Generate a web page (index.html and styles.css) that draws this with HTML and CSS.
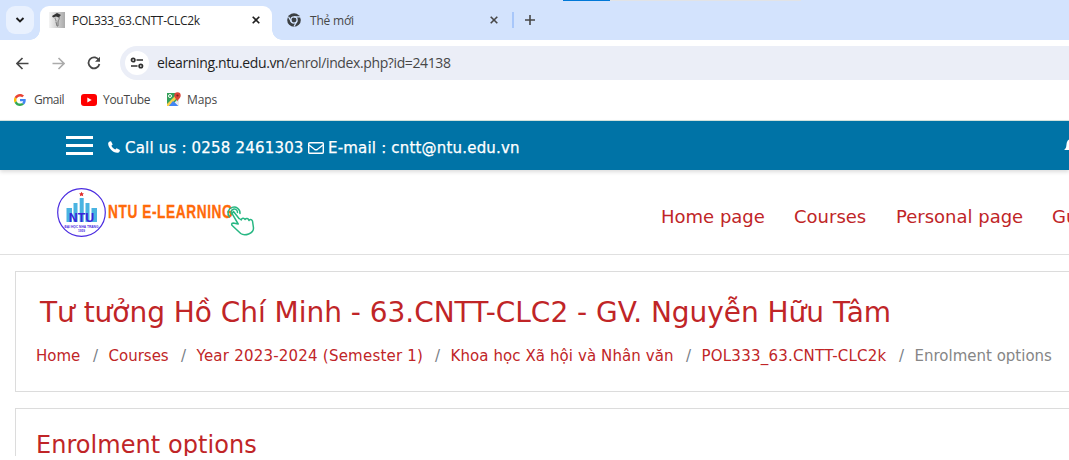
FILE: index.html
```html
<!DOCTYPE html>
<html lang="vi">
<head>
<meta charset="utf-8">
<title>POL333_63.CNTT-CLC2k</title>
<link rel="stylesheet" href="styles.css">
</head>
<body>
<div class="window">
  <div class="tabstrip">
    <div class="loadbar"></div>
    <button class="tab-search"><svg width="10" height="10" viewBox="0 0 10 10"><path d="M1.500 3 5 6.500 8.500 3" fill="none" stroke="#1f1f1f" stroke-width="1.900"/></svg></button>
    <div class="tab active">
      <svg class="favicon" width="16" height="16" viewBox="0 0 16 16"><defs><linearGradient id="fg"><stop offset="0" stop-color="#f4f4f4"/><stop offset="1" stop-color="#aaa"/></linearGradient></defs><path d="M0 0h16v16H0z" fill="url(#fg)"/><path d="M3 4 8 1l4 2-1 1-1 1.500-3-1-3 1z" fill="#333"/><path d="M6 5.500c0 2 1 2 1 4M10 5c1 2-1 3-1 5v4H8l-1-4" fill="none" stroke="#777"/></svg>
      <span class="tab-title">POL333_63.CNTT-CLC2k</span>
      <svg class="close" width="8" height="8" viewBox="0 0 8 8"><path d="m.7.7 6.600 6.600M7.300.7.7 7.300" stroke="#1f1f1f" stroke-width="1.600"/></svg>
    </div>
    <div class="tab idle">
      <svg class="chrome" width="14" height="14" viewBox="0 0 16 16"><circle cx="8" cy="8" r="7.800" fill="#3c4043"/><circle cx="8" cy="8" r="3.600" fill="none" stroke="#d3e3fd" stroke-width="1.500"/><path d="M8 4.400h7.500M4.900 9.800 1.800 4.400M11.100 9.800 8 15.500" stroke="#d3e3fd" stroke-width="1.400"/></svg>
      <span class="tab-title">Thẻ mới</span>
      <svg class="close" width="8" height="8" viewBox="0 0 8 8"><path d="m.7.7 6.600 6.600M7.300.7.7 7.300" stroke="#474747" stroke-width="1.600"/></svg>
    </div>
    <span class="divider"></span>
    <svg class="plus" width="10" height="10" viewBox="0 0 10 10"><path d="M5 0v10M0 5h10" stroke="#474747" stroke-width="1.600"/></svg>
  </div>
  <div class="toolbar">
    <svg class="back" width="13" height="13" viewBox="0 0 13 13"><path d="M12.500 6.500H1.200M6.500 1 1 6.500l5.500 5.500" fill="none" stroke="#474747" stroke-width="1.700"/></svg>
    <svg class="forward" width="13" height="13" viewBox="0 0 13 13"><path d="M.5 6.500h11.300M6.500 1 12 6.500 6.500 12" fill="none" stroke="#ababab" stroke-width="1.600"/></svg>
    <svg class="reload" width="14" height="14" viewBox="0 0 14 14"><path d="M12 4.500A5.500 5.500 0 1 0 12.400 8" fill="none" stroke="#474747" stroke-width="1.800"/><path d="M13 .8v5H8z" fill="#474747"/></svg>
    <div class="omnibox">
      <span class="site-info"><svg width="14" height="12" viewBox="0 0 14 12"><g fill="none" stroke="#303030" stroke-width="1.700"><circle cx="3.200" cy="3" r="1.700"/><circle cx="10.800" cy="9" r="1.700"/><path d="M6.500 3H13M1 9h6.500"/></g></svg></span>
      <span class="url"><b>elearning.ntu.edu.vn</b>/enrol/index.php?id=24138</span>
    </div>
  </div>
  <div class="bookmarks">
    <svg class="google" width="12" height="12" viewBox="0 0 48 48"><path fill="#EA4335" d="M24 9.500c3.540 0 6.710 1.220 9.210 3.600l6.850-6.850C35.900 2.380 30.470 0 24 0 14.620 0 6.510 5.380 2.560 13.220l7.980 6.190C12.430 13.720 17.740 9.500 24 9.500z"/><path fill="#4285F4" d="M46.980 24.550c0-1.570-.15-3.090-.38-4.550H24v9.020h12.940c-.58 2.960-2.260 5.480-4.780 7.180l7.730 6c4.510-4.180 7.090-10.360 7.090-17.650z"/><path fill="#FBBC05" d="M10.530 28.590a14.500 14.500 0 0 1 0-9.180l-7.980-6.190a24 24 0 0 0 0 21.560z"/><path fill="#34A853" d="M24 48c6.480 0 11.930-2.130 15.890-5.810l-7.730-6c-2.150 1.450-4.920 2.300-8.160 2.300-6.260 0-11.570-4.220-13.470-9.910l-7.980 6.190C6.510 42.620 14.620 48 24 48z"/></svg>
    <span class="bm gmail">Gmail</span>
    <svg class="yt" width="16" height="12" viewBox="0 0 16 12"><rect width="16" height="12" rx="3" fill="#f00"/><path d="m6.300 3.500 4.400 2.500-4.400 2.500z" fill="#fff"/></svg>
    <span class="bm youtube">YouTube</span>
    <svg class="map" width="16" height="15" viewBox="0 0 16 15"><path d="M1 1h12v13H1z" fill="#34a05a"/><path d="M5 14 13 6v8z" fill="#e8e9ed"/><path d="m3 14 4-5 5 5z" fill="#4285f4"/><path d="M1 12 10 3l2 2-9 9H1z" fill="#fbd04a"/><path d="m3 14 4-5 5 5z" fill="#4285f4"/><circle cx="4" cy="4" r="1.500" fill="none" stroke="#fff"/><path d="M11.500 9.500C11 7 8.300 6.500 8.300 3.500a3.200 3.200 0 0 1 6.400 0c0 3-2.700 3.500-3.200 6z" fill="#db4437"/><circle cx="11.500" cy="3.500" r="1.100" fill="#7b231e"/></svg>
    <span class="bm maps">Maps</span>
  </div>

  <div class="topbar">
    <span class="menu"><i></i><i></i><i></i></span>
    <svg class="phone" width="12" height="12" viewBox="0 0 12 12"><path d="M.2 2.200C.4.900 1.800 0 3 .2L4.700 3.400 3.400 4.800c.8 1.600 2.200 3 3.800 3.800l1.400-1.300 3.300 1.700c.1 1.200-.8 2.600-2 2.800C5.300 12.500-.4 6.500.2 2.200z" fill="#fff"/></svg>
    <span class="contact call">Call us : 0258 2461303</span>
    <svg class="mail" width="16" height="12" viewBox="0 0 16 12"><rect x=".7" y=".7" width="14.600" height="10.600" rx="1" fill="none" stroke="#fff" stroke-width="1.400"/><path d="m1 3 5.500 4.300q1.500 1 3 0L15 3" fill="none" stroke="#fff" stroke-width="1.400"/></svg>
    <span class="contact email">E-mail : cntt@ntu.edu.vn</span>
    <svg class="bell" width="16" height="14" viewBox="0 0 16 14"><path d="M0 12c3-2 2-5 3-8 .7-2 2-3 5-3s4.500 1 5 3c1 3 0 6 3 8z" fill="#fff"/></svg>
  </div>

  <header class="site-header">
    <svg class="logo" width="200" height="52" viewBox="0 0 200 52">
      <circle cx="25.500" cy="26.500" r="23.800" fill="#fff" stroke="#4a2be0" stroke-width="1.200"/>
      <path d="m25.500 5.800.8 1.500 1.700.1-1.200 1.200.4 1.700-1.700-.8-1.600.8.3-1.700L23 7.400l1.700-.1z" fill="#e02b2b"/>
      <path d="M10.500 22H16v14h-5.500zM17.500 17h4v19h-4zM23.700 12h4v24h-4zM29.500 17h4v19h-4zM35.500 22h5.500v14h-5.500z" fill="#49b3e1"/>
      <text class="logo-ntu" x="12.700" y="35.800" textLength="25.500" lengthAdjust="spacingAndGlyphs">NTU</text>
      <text class="logo-small" x="8.500" y="41.500" textLength="34" lengthAdjust="spacingAndGlyphs">ĐẠI HỌC NHA TRANG</text>
      <text class="logo-small" x="22" y="46" textLength="7" lengthAdjust="spacingAndGlyphs">1959</text>
      <text class="logo-name" transform="translate(52 31.500) scale(.76 1)" x="0" y="0" textLength="164">NTU E-LEARNING</text>
      <g transform="translate(-1 0)" fill="none" stroke="#27b783" stroke-width="1.500" stroke-linecap="round" stroke-linejoin="round"><path d="M174.500 31a6 6 0 1 1 10.500-3.500M177 28.500a3.200 3.200 0 1 1 5.500-2"/><path d="m178.500 25.500 5.500 7M178.500 25.500c-1.500 1-1.500 2-.8 3.200l5.500 9.300-5-1c-2 0-2 2-.5 3l8 7.500c4 3 13 0 12.800-5.500l-1-7c-1-2-3-2-3.500-.5-.5-2.500-3-2.500-4-1-1-2-3.500-1.500-3.700.5l-2-1.500"/></g>
    </svg>
    <nav class="nav"><a class="n1">Home page</a><a class="n2">Courses</a><a class="n3">Personal page</a><a>Guide</a></nav>
  </header>

  <main>
    <section class="card heading">
      <h1>Tư tưởng Hồ Chí Minh - 63.CNTT-CLC2 - GV. Nguyễn Hữu Tâm</h1>
      <ol class="crumbs"><li class="c1">Home</li><li class="c2">Courses</li><li class="c3">Year 2023-2024 (Semester 1)</li><li class="c4">Khoa học Xã hội và Nhân văn</li><li class="c5">POL333_63.CNTT-CLC2k</li><li class="c6">Enrolment options</li></ol>
    </section>
    <section class="card options"><h2>Enrolment options</h2></section>
  </main>
</div>
</body>
</html>
```
FILE: styles.css
```css
* { box-sizing: border-box; }
body { margin: 0; background: #fff; font-family: "DejaVu Sans", sans-serif; }
svg { display: block; flex: none; }
.window { width: 1069px; height: 460px; overflow: hidden; white-space: nowrap; }

.tabstrip { position: relative; display: flex; align-items: center; height: 40px; background: #d3e3fd; font: 12px/16px "Open Sans", sans-serif; color: #1f1f1f; }
.loadbar { position: absolute; left: 563px; top: 0; width: 238px; height: 1px; background: linear-gradient(90deg, #0078d7 47px, #e1e3e6 47px); }
.tab-search { width: 28px; height: 28px; margin-left: 6px; padding: 0; border: 0; border-radius: 9px; background: #e9f1fe; display: grid; place-items: center; }
.tab { display: flex; align-items: center; }
.tab.active { position: relative; width: 232px; height: 34px; margin: 6px 0 0 6px; padding: 0 12px 6px 9px; background: #fff; border-radius: 9px 9px 0 0; }
.tab.active::before, .tab.active::after { content: ""; position: absolute; bottom: 0; width: 10px; height: 10px; }
.tab.active::before { left: -10px; background: radial-gradient(circle at 0 0, transparent 9.500px, #fff 10px); }
.tab.active::after { right: -10px; background: radial-gradient(circle at 100% 0, transparent 9.500px, #fff 10px); }
.tab .close { margin-left: auto; }
.tab.active .tab-title { margin: 2px 0 0 7px; letter-spacing: -0.3px; }
.tab.idle { width: 226px; padding-left: 15px; }
.tab.idle .tab-title { margin: 2px 0 0 9px; color: #474747; letter-spacing: -0.2px; }
.divider { width: 2px; height: 16px; margin-left: 14px; background: #a8c7fa; }
.plus { margin-left: 11px; }

.toolbar { display: flex; align-items: center; height: 46px; }
.back { margin-left: 16px; }
.forward { margin-left: 23px; }
.reload { margin-left: 22px; }
.omnibox { display: flex; align-items: center; flex: 1; height: 34px; margin-left: 19px; padding-left: 5px; background: #ebeef7; border-radius: 17px 0 0 17px; }
.site-info { width: 24px; height: 24px; border-radius: 12px; background: #fff; display: grid; place-items: center; }
.url { margin-left: 8px; font: 14px/20px "Open Sans", sans-serif; color: #474747; letter-spacing: -0.38px; }
.url b { font-weight: 400; color: #1f1f1f; }

.bookmarks { display: flex; align-items: center; height: 35px; padding: 0 0 7px 14px; border-bottom: 1px solid #d5e5e0; font: 12px/16px "Open Sans", sans-serif; color: #474747; }
.bm { letter-spacing: -0.3px; }
.gmail { width: 47px; margin-left: 8px; letter-spacing: -0.5px; }
.youtube { width: 64px; margin-left: 6px; }
.maps { margin-left: 5px; letter-spacing: -0.1px; }
.map { margin-left: -1px; }

.topbar { position: relative; display: flex; height: 49px; background: #0073a6; box-shadow: 0 2px 4px rgba(0,0,0,.14); color: #fff; }
.menu { display: flex; flex-direction: column; gap: 5px; margin: 15px 0 0 66px; }
.menu i { width: 27px; height: 3px; background: #fff; }
.phone { margin: 20px 0 0 15px; }
.contact { font: 15px/20px "DejaVu Sans", sans-serif; margin-top: 17px; letter-spacing: .19px; -webkit-text-stroke: .25px #fff; }
.call { width: 178px; margin-left: 5px; }
.mail { margin: 21px 0 0 5px; }
.email { margin-left: 4px; }
.bell { position: absolute; left: 1064px; top: 17px; }

.site-header { display: flex; height: 85px; border-bottom: 1px solid #e0e0e0; }
.logo { margin: 16px 0 0 56px; }
.logo-ntu { font: bold 13.500px "Liberation Sans", sans-serif; fill: #3823da; }
.logo-small { font: bold 4px "Liberation Sans", sans-serif; fill: #4a2be0; }
.logo-name { font: bold 18px "Liberation Sans", sans-serif; fill: #ff6a0a; stroke: #ff6a0a; stroke-width: .3px; }
.nav { display: flex; margin: 35px 0 0 405px; font-size: 18px; line-height: 24px; color: #c02527; }
.n1 { width: 133px; }
.n2 { width: 102px; }
.n3 { width: 156px; }

main { padding: 16px 0 0 15px; color: #c02527; }
.card { width: 1080px; border: 1px solid #dcdcdc; }
.heading { height: 121px; padding: 24px 0 0 20px; }
h1 { margin: 0 0 0 4px; font-size: 28px; font-weight: 400; line-height: 34px; letter-spacing: -0.03px; }
.crumbs { display: flex; margin: 16px 0 0; padding: 0; list-style: none; font-size: 15px; line-height: 20px; }
.crumbs li + li::before { content: "/"; display: inline-block; width: 15.500px; color: #777e85; letter-spacing: 0; }
.c1 { width: 57px; }
.c2 { width: 88px; }
.c3 { width: 254px; letter-spacing: .22px; }
.c4 { width: 251px; letter-spacing: .09px; }
.c5 { width: 213px; letter-spacing: .22px; }
.c6 { color: #868686; }
.options { height: 48px; margin-top: 16px; padding: 21px 0 0 20px; border-bottom: 0; overflow: hidden; }
h2 { margin: 0; font-size: 24px; font-weight: 400; line-height: 30px; letter-spacing: .05px; }
```
